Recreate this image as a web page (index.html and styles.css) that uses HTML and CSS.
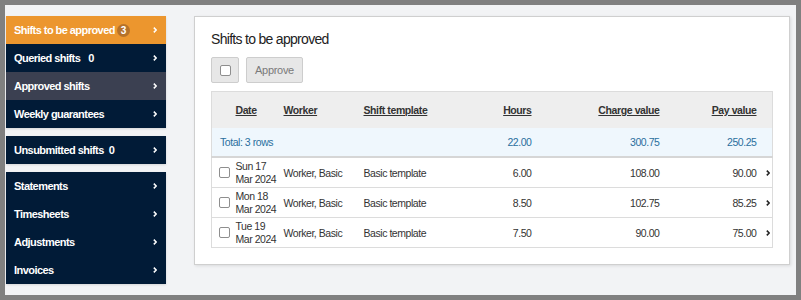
FILE: index.html
```html
<!DOCTYPE html>
<html lang="en">
  <head>
    <meta charset="UTF-8" />
    <meta name="viewport" content="width=device-width, initial-scale=1.0" />
    <title>Shifts to be approved</title>
    <link rel="stylesheet" href="styles.css">
  </head>
  <body>
    <div class="app">
      <nav class="sidebar">
        <ul class="menu-group">
          <li class="menu-item active">
            <span class="label">Shifts to be approved<span class="badge filled">3</span></span>
            <svg class="chevron" viewBox="0 0 4 6"><path d="M0.8 0.6 L3.2 3 L0.8 5.4" /></svg>
          </li>
          <li class="menu-item">
            <span class="label">Queried shifts<span class="badge wide">0</span></span>
            <svg class="chevron" viewBox="0 0 4 6"><path d="M0.8 0.6 L3.2 3 L0.8 5.4" /></svg>
          </li>
          <li class="menu-item selected">
            <span class="label">Approved shifts</span>
            <svg class="chevron" viewBox="0 0 4 6"><path d="M0.8 0.6 L3.2 3 L0.8 5.4" /></svg>
          </li>
          <li class="menu-item">
            <span class="label">Weekly guarantees</span>
            <svg class="chevron" viewBox="0 0 4 6"><path d="M0.8 0.6 L3.2 3 L0.8 5.4" /></svg>
          </li>
        </ul>
        <ul class="menu-group">
          <li class="menu-item">
            <span class="label">Unsubmitted shifts<span class="badge">0</span></span>
            <svg class="chevron" viewBox="0 0 4 6"><path d="M0.8 0.6 L3.2 3 L0.8 5.4" /></svg>
          </li>
        </ul>
        <ul class="menu-group">
          <li class="menu-item">
            <span class="label">Statements</span>
            <svg class="chevron" viewBox="0 0 4 6"><path d="M0.8 0.6 L3.2 3 L0.8 5.4" /></svg>
          </li>
          <li class="menu-item">
            <span class="label">Timesheets</span>
            <svg class="chevron" viewBox="0 0 4 6"><path d="M0.8 0.6 L3.2 3 L0.8 5.4" /></svg>
          </li>
          <li class="menu-item">
            <span class="label">Adjustments</span>
            <svg class="chevron" viewBox="0 0 4 6"><path d="M0.8 0.6 L3.2 3 L0.8 5.4" /></svg>
          </li>
          <li class="menu-item">
            <span class="label">Invoices</span>
            <svg class="chevron" viewBox="0 0 4 6"><path d="M0.8 0.6 L3.2 3 L0.8 5.4" /></svg>
          </li>
        </ul>
      </nav>

      <main class="panel">
        <h2 class="panel-title">Shifts to be approved</h2>

        <div class="toolbar">
          <button class="btn btn-check"><input type="checkbox" class="check" /></button>
          <button class="btn btn-approve" disabled>Approve</button>
        </div>

        <table class="shifts">
          <colgroup>
            <col class="c-check" />
            <col class="c-date" />
            <col class="c-worker" />
            <col class="c-template" />
            <col class="c-hours" />
            <col class="c-charge" />
            <col class="c-pay" />
            <col class="c-more" />
          </colgroup>
          <thead>
            <tr>
              <th></th>
              <th><a href="#">Date</a></th>
              <th><a href="#">Worker</a></th>
              <th><a href="#">Shift template</a></th>
              <th class="num"><a href="#">Hours</a></th>
              <th class="num"><a href="#">Charge value</a></th>
              <th class="num"><a href="#">Pay value</a></th>
              <th></th>
            </tr>
          </thead>
          <tbody>
            <tr class="total-row">
              <td colspan="4" class="total-label">Total: 3 rows</td>
              <td class="num">22.00</td>
              <td class="num">300.75</td>
              <td class="num">250.25</td>
              <td></td>
            </tr>
            <tr>
              <td class="cell-check"><input type="checkbox" class="check" /></td>
              <td class="date">Sun 17<br />Mar 2024</td>
              <td>Worker, Basic</td>
              <td>Basic template</td>
              <td class="num">6.00</td>
              <td class="num">108.00</td>
              <td class="num">90.00</td>
              <td class="more"><svg class="row-chevron" viewBox="0 0 4 6"><path d="M0.8 0.6 L3.2 3 L0.8 5.4" /></svg></td>
            </tr>
            <tr>
              <td class="cell-check"><input type="checkbox" class="check" /></td>
              <td class="date">Mon 18<br />Mar 2024</td>
              <td>Worker, Basic</td>
              <td>Basic template</td>
              <td class="num">8.50</td>
              <td class="num">102.75</td>
              <td class="num">85.25</td>
              <td class="more"><svg class="row-chevron" viewBox="0 0 4 6"><path d="M0.8 0.6 L3.2 3 L0.8 5.4" /></svg></td>
            </tr>
            <tr>
              <td class="cell-check"><input type="checkbox" class="check" /></td>
              <td class="date">Tue 19<br />Mar 2024</td>
              <td>Worker, Basic</td>
              <td>Basic template</td>
              <td class="num">7.50</td>
              <td class="num">90.00</td>
              <td class="num">75.00</td>
              <td class="more"><svg class="row-chevron" viewBox="0 0 4 6"><path d="M0.8 0.6 L3.2 3 L0.8 5.4" /></svg></td>
            </tr>
          </tbody>
        </table>
      </main>
    </div>
  </body>
</html>
```

FILE: styles.css
```css
/* Marco gris alrededor de la pantalla */
body {
  margin: 0;
  padding: 5px;
  background-color: #808080;
  font-family: "Liberation Sans", Arial, sans-serif;
}

.app {
  height: 290px;
  background-color: #f2f3f5;
  display: flex;
  align-items: flex-start;
  gap: 28px;
  padding: 11px 0 0 1px;
  box-sizing: border-box;
}

/* Menu lateral */
.sidebar {
  width: 160px;
  display: flex;
  flex-direction: column;
  gap: 8px;
}
.menu-group {
  list-style: none;
  margin: 0;
  padding: 0;
  background-color: #011b37;
  box-shadow: 0 1px 2px rgba(0, 0, 0, 0.12);
}
.menu-item {
  height: 28px;
  display: flex;
  align-items: center;
  justify-content: space-between;
  padding: 0 9px 0 8px;
  color: #fff;
  font-size: 11px;
  font-weight: bold;
  letter-spacing: -0.55px;
  cursor: pointer;
}
.menu-item.active {
  background-color: #ec962e;
}
.menu-item.selected {
  background-color: #3b4051;
}
.label {
  display: flex;
  align-items: center;
}
.badge {
  margin-left: 5px;
  letter-spacing: 0;
}
.badge.wide {
  margin-left: 8px;
}
.badge.filled {
  margin-left: 2px;
  width: 13px;
  height: 13px;
  border-radius: 50%;
  background-color: #b6722a;
  display: inline-flex;
  align-items: center;
  justify-content: center;
  font-size: 10px;
}
.chevron {
  width: 4px;
  height: 6px;
  fill: none;
  stroke: #fff;
  stroke-width: 1.5;
}

/* Panel principal */
.panel {
  width: 596px;
  background-color: #fff;
  border: 1px solid #cfcfcf;
  box-shadow: 1px 1px 3px rgba(0, 0, 0, 0.1);
  padding: 12px 17px 16px 16px;
  box-sizing: border-box;
}
.panel-title {
  margin: 0;
  font-size: 14px;
  font-weight: normal;
  line-height: 20px;
  color: #222;
  letter-spacing: -0.7px;
}

.toolbar {
  display: flex;
  gap: 7px;
  margin: 8px 0;
}
.btn {
  height: 26px;
  background-color: #e7e7e7;
  border: 1px solid #cdcdcd;
  border-radius: 2px;
  font-family: inherit;
  padding: 0;
  display: flex;
  align-items: center;
  justify-content: center;
}
.btn-check {
  width: 28px;
}
.btn-approve {
  width: 57px;
  color: #7a7a7a;
  font-size: 11px;
  letter-spacing: -0.3px;
}

.check {
  appearance: none;
  margin: 0;
  width: 11px;
  height: 11px;
  border: 1px solid #8e8e8e;
  border-radius: 2px;
  background-color: #fff;
}

/* Tabla de turnos */
.shifts {
  width: 561px;
  table-layout: fixed;
  border-collapse: collapse;
  border: 1px solid #dcdcdc;
  font-size: 10.5px;
  letter-spacing: -0.45px;
  color: #333;
}
.c-check { width: 20px; }
.c-date { width: 48px; }
.c-worker { width: 80px; }
.c-template { width: 96px; }
.c-hours { width: 80px; }
.c-charge { width: 128px; }
.c-pay { width: 97px; }
.c-more { width: 12px; }

.shifts th {
  height: 36px;
  background-color: #eeeeee;
  text-align: left;
  padding: 0 4px;
  font-weight: bold;
}
.shifts th a {
  color: #333;
  text-decoration: underline;
  letter-spacing: -0.4px;
}
.shifts td {
  height: 29px;
  padding: 0 4px;
  border-bottom: 1px solid #dcdcdc;
  vertical-align: middle;
  white-space: nowrap;
}
.shifts .num {
  text-align: right;
}
.shifts .total-row td {
  height: 28px;
  background-color: #eff7fd;
  color: #2a6f9e;
  border-bottom: 2px solid #d6d6d6;
}
.shifts .total-label {
  padding-left: 8px;
}
.shifts .cell-check {
  padding: 0 0 0 7px;
}
.cell-check .check {
  display: block;
}
.shifts .date {
  line-height: 12.6px;
}
.shifts .more {
  padding: 0 0 0 5px;
}
.row-chevron {
  display: block;
  width: 4px;
  height: 6px;
  fill: none;
  stroke: #222;
  stroke-width: 1.6;
}
```
